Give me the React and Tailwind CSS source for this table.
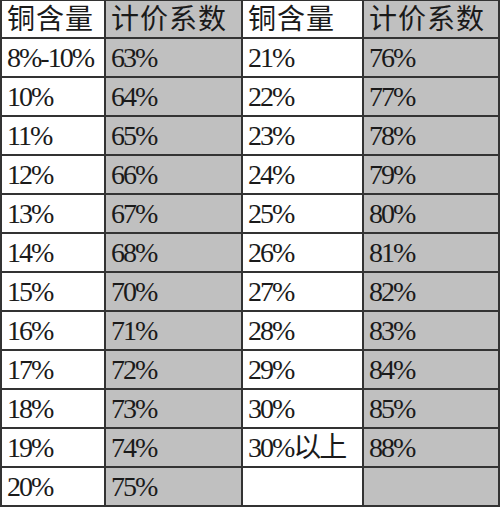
import React from 'react';

const rows = [
  ['8%-10%', '63%', '21%', '76%'],
  ['10%', '64%', '22%', '77%'],
  ['11%', '65%', '23%', '78%'],
  ['12%', '66%', '24%', '79%'],
  ['13%', '67%', '25%', '80%'],
  ['14%', '68%', '26%', '81%'],
  ['15%', '70%', '27%', '82%'],
  ['16%', '71%', '28%', '83%'],
  ['17%', '72%', '29%', '84%'],
  ['18%', '73%', '30%', '85%'],
  ['19%', '74%', '30%以上', '88%'],
  ['20%', '75%', '', ''],
];

const header = ['铜含量', '计价系数', '铜含量', '计价系数'];

function Cell({ text, col, first }) {
  const gray = col % 2 === 1;
  return (
    <div
      className={`h-[39px] border-b-2 border-r-2 border-[#333] pl-[5px] leading-[38px] text-[28px] text-[#1a1a1a] whitespace-nowrap overflow-hidden font-['Liberation_Serif','Noto_Sans_CJK_SC',serif] ${
        col === 0 ? 'border-l-2' : ''
      } ${first ? 'border-t tracking-[1px]' : 'tracking-[-2px]'} ${gray ? 'bg-[#c0c0c0]' : 'bg-white'}`}
    >
      {text}
    </div>
  );
}

export default function App() {
  return (
    <div className="w-[500px] h-[507px] bg-white">
      <div className="grid grid-cols-[106px_137px_121px_136px]">
        {header.map((h, i) => (
          <Cell key={'h' + i} text={h} col={i} first />
        ))}
        {rows.map((r, ri) =>
          r.map((c, ci) => <Cell key={ri + '-' + ci} text={c} col={ci} />)
        )}
      </div>
    </div>
  );
}
